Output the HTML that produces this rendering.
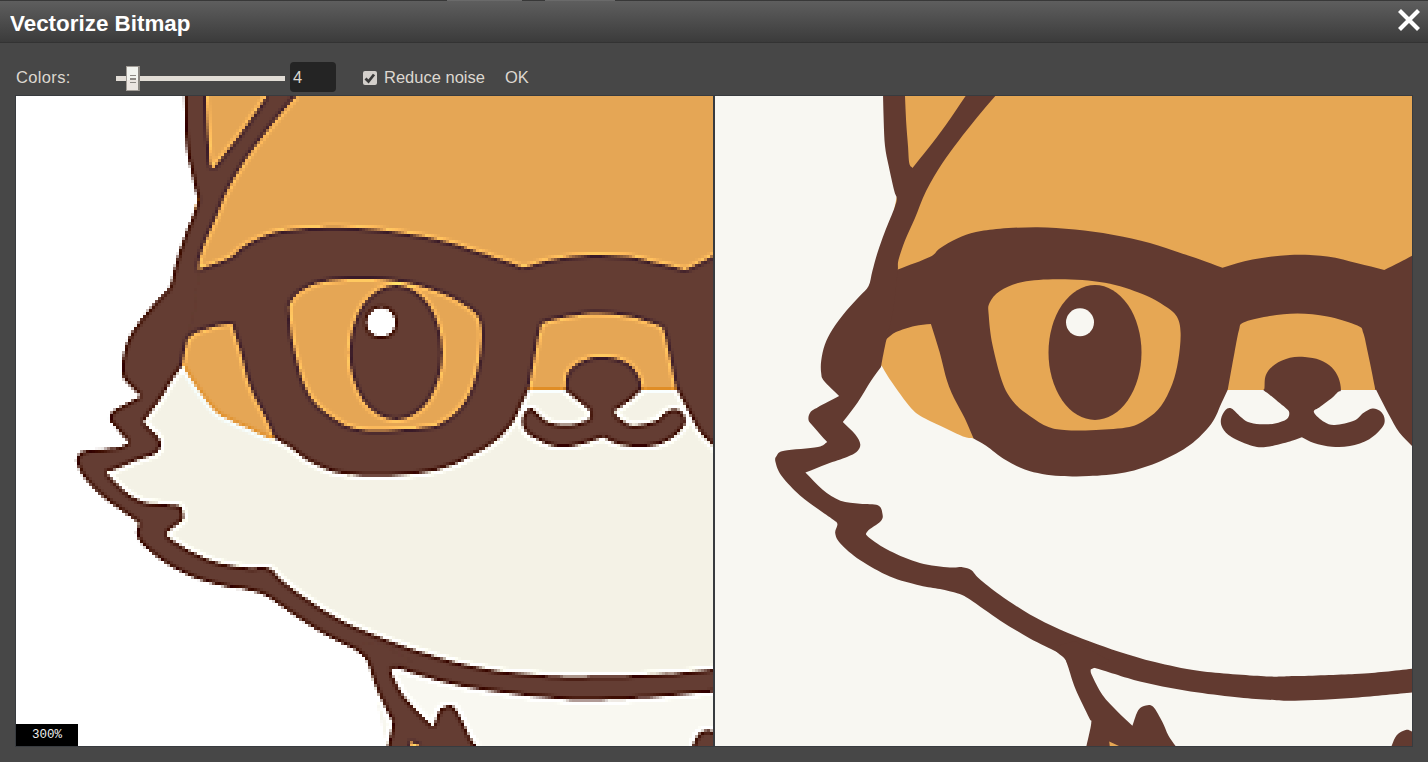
<!DOCTYPE html>
<html><head><meta charset="utf-8"><style>
html,body{margin:0;padding:0;}
body{width:1428px;height:762px;overflow:hidden;background:#474747;position:relative;font-family:"Liberation Sans",sans-serif;}
#title{position:absolute;left:0;top:0;width:1428px;height:42px;background:linear-gradient(#5e5e5e,#3b3b3b);border-top:1px solid #383838;box-sizing:border-box;}
.seg{position:absolute;top:0;height:1px;background:#6a6a6a;}
#tline{position:absolute;left:0;top:42px;width:1428px;height:1px;background:#333;}
#ttext{position:absolute;left:10px;top:12.7px;font-size:22px;line-height:22px;font-weight:bold;color:#fff;white-space:nowrap;transform:scaleX(1.018);transform-origin:0 0;}
#close{position:absolute;left:1396px;top:7px;width:26px;height:26px;}
.lbl{position:absolute;color:#ddd8d0;font-size:16.5px;line-height:16.5px;white-space:nowrap;}
#track{position:absolute;left:116px;top:76px;width:169px;height:5px;background:#e2ddd6;}
#handle{position:absolute;left:126px;top:66px;width:14px;height:25px;box-sizing:border-box;border:1px solid #a09b95;border-right:2px solid #8a8680;background:linear-gradient(#f2f3ee 0,#f2f3ee 56%,#ebe5e0 56%,#ebe5e0 100%);}
#handle i{position:absolute;left:3px;width:6px;background:#8d8984;}
#inp{position:absolute;left:290px;top:62px;width:46px;height:30px;background:#242424;border-radius:4px;}
#chk{position:absolute;left:363px;top:71px;width:14px;height:14px;box-sizing:border-box;background:#d3cfcb;border-radius:2px;}
#stage{position:absolute;left:15px;top:95px;width:1398px;height:652px;background:#383b3f;}
.panel{position:absolute;top:96px;width:697px;height:650px;}
#lwrap{position:absolute;left:16px;top:96px;width:697px;height:650px;overflow:hidden;}
#cv{position:absolute;left:-2px;top:0;width:702px;height:651px;image-rendering:pixelated;}
#zoom{position:absolute;left:16px;top:724px;width:62px;height:22px;background:#000;color:#eee;font-family:"Liberation Mono",monospace;font-size:12.5px;line-height:22px;text-align:center;}
</style></head><body>
<div id="title"></div><div class="seg" style="left:447px;width:75px"></div><div class="seg" style="left:545px;width:70px"></div><div id="tline"></div>
<div id="ttext">Vectorize Bitmap</div>
<svg id="close" viewBox="0 0 26 26"><path d="M3.5,3.5 L22.5,22.5 M22.5,3.5 L3.5,22.5" stroke="#fff" stroke-width="4.2"/></svg>
<div class="lbl" style="left:16px;top:69px;letter-spacing:0.35px">Colors:</div>
<div id="track"></div><div id="handle"><i style="top:8px;height:1px"></i><i style="top:11px;height:2px"></i><i style="top:15px;height:1px"></i></div>
<div id="inp"></div><div class="lbl" style="left:293px;top:69px;">4</div>
<div id="chk"><svg width="14" height="14" viewBox="0 0 14 14" style="position:absolute;left:0;top:0"><path d="M2.5,7.5 L5.5,10.5 L11,3.5" stroke="#3a3a3a" stroke-width="2.8" fill="none"/></svg></div>
<div class="lbl" style="left:384px;top:69px;">Reduce noise</div>
<div class="lbl" style="left:505px;top:69px;">OK</div>
<div id="stage"></div>
<div id="lwrap"><svg style="position:absolute;left:0;top:0;width:697px;height:650px" viewBox="0 0 697 650"><rect width="697" height="650" fill="#ffffff"/>
<path d="M160.0,271.0 C165.3,275.7 169.9,278.1 176.0,285.0 C182.1,291.9 190.7,306.2 196.4,312.4 C202.1,318.6 204.3,319.1 210.1,322.4 C215.9,325.7 222.9,329.1 231.0,332.4 C239.1,335.7 249.4,339.1 258.6,342.4 C287.4,354.9 316.2,367.5 345.0,380.0 C400.9,351.3 456.8,322.7 512.7,294.0 C579.1,294.0 645.6,294.0 712.0,294.0 C712.0,392.7 712.0,491.3 712.0,590.0 C657.7,590.0 594.4,592.3 549.0,590.0 C503.6,587.7 473.9,583.5 439.9,576.0 C405.9,568.5 370.7,556.0 344.9,545.0 C319.1,534.0 303.4,520.5 285.0,510.0 C266.6,499.5 249.0,487.7 234.8,482.0 C220.6,476.3 210.8,478.3 200.0,476.0 C189.2,473.7 180.0,472.0 170.0,468.0 C160.0,464.0 150.0,457.3 140.0,452.0 C126.7,434.7 113.3,417.3 100.0,400.0 C91.7,390.0 83.3,380.0 75.0,370.0 C93.3,364.7 111.7,359.3 130.0,354.0 C125.0,344.7 120.0,335.3 115.0,326.0 C130.0,307.7 145.0,289.3 160.0,271.0 Z" fill="#f4f2e6"/>
<path d="M352.0,568.0 C361.3,569.3 360.4,567.6 380.0,572.0 C399.6,576.4 436.6,588.9 469.9,594.4 C503.2,599.9 539.5,604.5 579.9,604.8 C620.2,605.1 668.0,599.2 712.0,596.4 C712.0,614.9 712.0,633.5 712.0,652.0 C598.3,652.0 484.7,652.0 371.0,652.0 C364.7,624.0 358.3,596.0 352.0,568.0 Z" fill="#f9f8f1"/>
<path d="M176.0,-2.0 C354.7,-2.0 533.3,-2.0 712.0,-2.0 C712.0,96.7 712.0,195.3 712.0,294.0 C645.6,294.0 579.1,294.0 512.7,294.0 C441.8,302.7 370.9,311.3 300.0,320.0 C286.2,327.5 272.4,334.9 258.6,342.4 C255.7,342.0 254.5,342.8 249.9,341.1 C245.3,339.4 237.6,335.5 231.0,332.4 C224.4,329.3 215.9,325.7 210.1,322.4 C204.3,319.1 202.1,318.6 196.4,312.4 C190.7,306.2 181.0,292.1 176.0,285.0 C171.0,277.9 169.7,274.9 166.6,269.8 C161.1,266.5 155.5,263.3 150.0,260.0 C146.7,250.0 143.3,240.0 140.0,230.0 C148.3,213.3 156.7,196.7 165.0,180.0 C170.7,153.3 176.3,126.7 182.0,100.0 C181.7,83.3 181.3,66.7 181.0,50.0 C179.3,32.7 177.7,15.3 176.0,-2.0 Z" fill="#e5a655"/>
<path d="M182.9,173.6 C193.5,169.4 207.7,164.6 214.7,161.1 C221.7,157.6 220.1,155.5 224.7,152.4 C229.3,149.3 236.2,145.1 242.2,142.4 C248.2,139.7 253.8,137.7 260.9,136.1 C268.0,134.5 274.7,133.5 285.0,132.7 C295.3,131.9 310.0,131.1 322.5,131.2 C335.0,131.3 347.4,132.2 359.9,133.5 C372.4,134.8 384.9,136.4 397.4,138.7 C409.9,140.9 423.7,144.0 434.9,147.0 C446.1,150.0 456.4,153.9 464.8,156.7 C473.2,159.4 477.9,161.0 485.0,163.5 C492.1,166.0 500.0,169.0 507.5,171.7 C517.5,169.0 526.3,165.6 537.5,163.5 C548.7,161.4 562.4,159.5 574.9,159.0 C587.4,158.5 601.1,159.1 612.4,160.5 C623.6,161.9 632.9,165.0 642.4,167.2 C651.9,169.4 660.3,171.7 669.3,173.9 C674.3,171.4 679.7,168.9 684.3,166.5 C688.9,164.1 692.4,162.3 697.0,159.7 C701.6,157.1 707.0,153.9 712.0,151.0 C712.0,223.3 712.0,295.7 712.0,368.0 C707.0,362.0 701.6,355.2 697.0,350.0 C692.4,344.8 688.2,341.8 684.3,336.5 C680.4,331.2 677.7,325.6 673.8,318.5 C669.9,311.4 665.3,302.0 661.1,293.7 C611.6,293.7 562.2,293.7 512.7,293.7 C510.6,298.1 509.2,301.4 506.5,307.0 C503.8,312.6 501.8,320.4 496.5,327.4 C491.2,334.4 483.3,342.8 474.9,349.0 C466.5,355.2 456.8,360.3 446.0,364.9 C435.2,369.5 421.9,374.0 409.9,376.5 C397.9,379.0 384.6,379.5 373.9,380.1 C363.2,380.7 353.7,380.4 345.9,380.0 C338.1,379.6 333.2,379.0 327.2,377.9 C321.2,376.8 316.0,375.9 309.8,373.5 C303.6,371.1 296.2,367.6 289.8,363.6 C283.4,359.7 276.3,353.3 271.1,349.8 C265.9,346.3 262.8,344.9 258.6,342.4 C255.7,335.7 253.0,328.8 249.9,322.4 C246.8,315.9 242.9,309.9 239.9,303.7 C236.9,297.5 234.7,292.9 232.1,285.0 C229.5,277.1 227.3,265.6 224.6,256.1 C221.9,246.6 218.8,237.4 215.9,228.0 C210.5,228.6 205.5,228.6 199.7,229.9 C193.9,231.2 185.8,233.8 181.0,236.1 C176.2,238.4 174.3,241.1 171.0,243.6 C167.3,235.7 161.0,228.9 160.0,220.0 C159.0,211.1 163.3,200.0 165.0,190.0 C171.0,184.5 176.9,179.1 182.9,173.6 Z" fill="#643d33"/>
<path d="M285.0,195.0 C279.5,198.5 276.4,203.0 274.5,207.0 C272.6,211.0 273.2,212.0 273.7,219.0 C274.2,226.0 275.1,237.5 277.5,249.0 C279.9,260.5 284.3,278.3 288.0,288.0 C291.7,297.7 295.3,302.1 299.8,307.4 C304.3,312.7 309.2,315.9 314.8,319.9 C320.4,323.8 327.3,328.7 333.5,331.1 C339.7,333.5 344.3,333.8 352.2,334.3 C360.1,334.8 370.6,334.4 381.0,333.9 C391.4,333.3 405.9,332.8 414.3,331.0 C422.7,329.2 426.3,326.6 431.6,323.1 C436.9,319.6 441.7,316.0 446.0,310.1 C450.3,304.2 454.4,295.7 457.3,288.0 C460.2,280.3 461.9,272.4 463.3,263.9 C464.7,255.4 465.9,244.2 465.6,237.0 C465.4,229.8 464.4,224.9 461.8,220.4 C459.2,215.9 455.5,213.7 449.8,209.9 C444.1,206.2 437.4,201.8 427.4,197.9 C417.4,194.0 403.6,189.1 389.9,186.7 C376.1,184.2 358.6,183.3 344.9,183.2 C331.2,183.1 317.5,183.9 307.5,185.9 C297.5,187.9 290.5,191.5 285.0,195.0 Z" fill="#e5a655"/>
<path d="M528.5,226.5 C533.2,224.2 543.4,222.0 552.4,220.5 C561.4,219.0 572.4,217.5 582.4,217.5 C592.4,217.5 602.4,218.5 612.4,220.5 C622.4,222.5 636.4,226.8 642.4,229.5 C648.4,232.2 646.6,232.5 648.3,237.0 C650.0,241.5 650.9,247.7 652.8,256.5 C654.7,265.3 658.5,283.8 659.6,290.0 C660.7,296.2 659.6,292.7 659.6,294.0 C610.6,294.0 561.7,294.0 512.7,294.0 C515.0,281.5 517.6,266.5 519.5,256.5 C521.4,246.5 522.5,239.0 524.0,234.0 C525.5,229.0 523.8,228.8 528.5,226.5 Z" fill="#e5a655"/>
<ellipse cx="380" cy="256.5" rx="46.5" ry="67.5" fill="#643d33"/>
<circle cx="365" cy="226.3" r="14" fill="#ffffff"/>
<path d="M168.0,-2.0 C168.2,7.0 168.4,16.3 168.7,25.0 C169.0,33.7 169.2,42.5 170.0,50.0 C170.8,57.5 172.1,62.5 173.7,70.0 C175.2,77.5 178.0,89.7 179.3,95.0 C180.6,100.3 181.6,99.3 181.7,102.0 C181.8,104.7 181.8,105.3 179.8,111.0 C177.8,116.7 172.7,128.3 169.8,136.0 C166.9,143.7 164.5,150.5 162.4,157.0 C160.3,163.5 158.9,169.5 157.4,175.0 C155.9,180.5 155.7,185.8 153.6,190.0 C151.5,194.2 148.6,195.8 144.8,200.0 C141.1,204.2 135.7,209.4 131.1,215.0 C126.5,220.6 120.9,228.0 117.4,233.6 C113.9,239.2 111.8,243.4 109.9,248.6 C108.0,253.8 106.8,260.0 106.2,264.8 C105.6,269.6 105.7,273.9 106.2,277.3 C106.7,280.7 106.1,281.2 109.1,285.0 C112.1,288.8 119.1,295.0 124.1,300.0 C117.0,303.7 107.7,308.5 102.9,311.2 C98.1,313.9 97.0,314.1 95.4,316.2 C93.8,318.3 93.1,321.4 93.5,323.7 C93.9,326.0 94.8,326.2 97.9,329.9 C101.0,333.6 107.4,340.7 112.2,346.1 C109.1,347.8 110.1,349.7 102.9,351.1 C95.7,352.6 76.1,353.4 69.2,354.8 C62.3,356.2 63.2,357.9 61.7,359.8 C60.2,361.7 59.7,362.6 60.5,366.0 C61.3,369.4 62.6,374.4 66.7,380.0 C70.8,385.6 79.0,394.0 85.0,399.5 C91.0,405.0 97.5,409.0 103.0,413.0 C108.5,417.0 114.7,421.0 117.9,423.5 C121.1,426.0 122.0,425.8 122.4,428.0 C122.8,430.2 119.7,433.8 120.2,437.0 C120.7,440.2 121.3,442.9 125.4,447.4 C129.5,451.9 136.7,458.4 144.9,463.9 C153.2,469.4 164.9,476.1 174.9,480.4 C184.9,484.6 196.6,487.3 204.9,489.4 C213.2,491.5 218.7,491.6 225.0,493.0 C231.3,494.4 238.0,495.8 243.0,497.5 C248.0,499.2 248.0,499.0 255.0,503.5 C262.0,508.0 275.0,517.9 285.0,524.4 C295.0,530.9 305.4,537.1 314.9,542.4 C324.4,547.6 336.1,552.6 341.9,555.9 C347.6,559.1 347.6,559.9 349.4,561.9 C351.1,563.9 351.4,566.0 352.4,568.0 C360.1,569.8 367.8,571.7 375.5,573.5 C377.0,573.0 371.8,570.0 380.0,572.0 C388.2,574.0 409.9,581.8 424.9,585.5 C439.9,589.2 454.9,591.9 469.9,594.4 C484.9,596.9 501.6,598.9 514.8,600.4 C528.0,601.9 538.1,602.7 549.0,603.4 C559.9,604.1 564.8,605.1 579.9,604.8 C595.0,604.5 620.3,603.2 639.8,601.8 C659.3,600.4 685.0,597.7 697.0,596.6 C709.0,595.5 707.0,595.5 712.0,595.0 C712.0,587.0 712.0,579.0 712.0,571.0 C707.0,571.6 704.0,571.9 697.0,572.7 C690.0,573.5 679.2,574.8 669.7,575.7 C660.2,576.6 654.8,577.2 639.8,577.9 C624.8,578.6 595.0,579.7 579.9,580.1 C564.8,580.5 564.8,581.1 549.0,580.2 C533.2,579.4 503.1,577.4 484.9,575.0 C466.7,572.6 453.2,569.2 439.9,566.0 C426.5,562.8 415.6,559.3 404.8,555.9 C394.0,552.5 384.9,549.1 374.9,545.4 C364.9,541.6 354.9,537.9 344.9,533.4 C334.9,528.9 324.9,524.1 314.9,518.4 C304.9,512.7 293.5,505.0 285.0,499.0 C276.5,493.0 268.8,486.6 264.0,482.5 C259.2,478.4 259.2,476.1 256.5,474.2 C253.8,472.3 251.1,471.7 247.5,471.2 C243.9,470.7 241.9,472.1 234.8,471.4 C227.7,470.7 214.9,469.6 204.9,466.9 C194.9,464.1 183.4,459.1 174.9,454.9 C166.4,450.6 157.7,444.6 153.9,441.4 C150.2,438.1 150.4,438.1 152.4,435.4 C154.4,432.7 163.4,428.0 165.9,425.0 C168.4,422.0 167.9,420.1 167.4,417.5 C166.9,414.9 166.7,410.8 162.9,409.2 C159.2,407.6 151.2,408.4 144.9,407.7 C138.7,406.9 131.7,407.1 125.4,404.7 C119.2,402.3 113.2,398.2 107.4,393.5 C101.6,388.8 96.1,382.2 90.4,376.6 C97.6,373.7 105.1,370.6 112.0,368.0 C118.9,365.4 127.1,363.0 132.0,361.0 C136.9,359.0 139.3,358.2 141.5,356.1 C143.7,354.0 145.5,351.5 145.3,348.6 C145.1,345.7 143.2,342.4 140.3,338.6 C137.4,334.9 132.0,330.3 127.8,326.1 C132.8,319.5 138.1,313.1 142.8,306.2 C147.5,299.3 152.0,290.9 155.9,285.0 C159.8,279.1 162.6,275.7 166.0,271.0 C167.3,264.0 168.0,259.3 170.0,250.0 C172.0,240.7 175.8,227.8 178.0,215.0 C180.2,202.2 181.3,187.0 182.9,173.0 C183.1,169.9 182.4,168.3 183.6,163.6 C184.8,158.9 187.1,151.8 189.8,144.9 C192.5,138.0 196.2,130.7 199.8,122.4 C203.4,114.1 206.5,104.2 211.1,95.0 C215.7,85.8 221.9,75.6 227.3,67.3 C232.7,58.9 237.7,52.6 243.5,44.9 C249.3,37.2 255.8,29.0 262.2,21.2 C268.6,13.4 275.4,5.7 282.0,-2.0 C272.0,-2.0 262.0,-2.0 252.0,-2.0 C245.0,8.2 237.6,19.4 231.0,28.7 C224.4,38.0 217.9,46.4 212.3,53.6 C206.7,60.8 202.4,65.9 197.5,72.0 C196.4,70.4 195.1,71.0 194.3,67.3 C193.6,63.6 193.5,57.0 193.0,50.0 C192.5,43.0 191.6,33.7 191.1,25.0 C190.6,16.3 190.3,7.0 189.9,-2.0 C182.6,-2.0 175.3,-2.0 168.0,-2.0 Z" fill="#643d33"/>
<path d="M340.0,552.0 C338.3,555.0 347.8,559.9 350.0,563.0 C352.2,566.1 351.2,565.5 353.0,570.5 C354.8,575.5 357.0,584.5 360.5,593.0 C364.0,601.5 371.4,615.7 374.0,621.4 C376.6,627.1 376.7,622.3 376.2,627.4 C375.7,632.5 372.7,643.8 371.0,652.0 C401.3,652.0 431.7,652.0 462.0,652.0 C459.1,647.8 455.8,643.7 453.4,639.4 C451.0,635.1 449.9,630.7 447.4,626.0 C444.9,621.3 441.1,613.8 438.4,611.0 C435.6,608.2 433.4,608.9 430.9,609.4 C428.4,609.9 425.6,610.6 423.4,614.0 C421.1,617.4 419.4,624.5 417.4,629.7 C412.4,624.9 407.4,620.5 402.4,615.4 C397.4,610.3 391.7,605.0 387.5,599.0 C383.3,593.0 379.0,583.8 377.0,579.5 C375.0,575.2 376.0,575.5 375.5,573.5 C382.0,570.7 388.5,567.8 395.0,565.0 C383.3,558.3 371.7,551.7 360.0,545.0 C353.3,547.3 341.7,549.0 340.0,552.0 Z" fill="#643d33"/>
<path d="M549.4,292.4 C549.9,289.9 549.1,282.9 550.9,278.9 C552.6,274.9 555.9,271.3 559.9,268.4 C563.9,265.5 569.9,262.9 574.9,261.7 C579.9,260.4 584.9,260.5 589.9,260.9 C594.9,261.3 600.4,262.1 604.9,263.9 C609.4,265.6 613.8,268.4 616.9,271.4 C620.0,274.4 622.1,278.2 623.6,281.9 C625.1,285.6 626.0,291.3 625.9,293.7 C625.8,296.1 624.4,294.6 622.9,296.0 C621.4,297.4 619.9,299.5 616.9,302.0 C613.9,304.5 607.9,308.6 604.9,311.0 C601.9,313.4 598.1,313.7 598.9,316.2 C599.6,318.7 605.9,323.9 609.4,326.0 C612.9,328.1 614.9,329.2 619.9,329.0 C624.9,328.8 634.7,326.5 639.4,324.5 C644.1,322.5 645.3,319.0 648.3,317.0 C651.3,315.0 654.5,312.9 657.3,312.5 C660.0,312.1 662.8,313.2 664.8,314.7 C666.8,316.2 668.8,318.9 669.3,321.5 C669.8,324.1 670.3,326.9 667.8,330.5 C665.3,334.1 659.8,339.9 654.3,343.2 C648.8,346.4 641.1,348.8 634.9,350.0 C628.7,351.2 622.9,351.2 616.9,350.7 C610.9,350.2 603.9,348.5 598.9,346.9 C593.9,345.3 590.9,343.1 586.9,341.2 C582.9,342.6 580.6,343.8 574.9,345.4 C569.1,347.0 558.6,349.9 552.4,350.7 C546.2,351.5 543.5,351.6 537.5,350.0 C531.5,348.4 521.5,344.0 516.5,341.0 C511.5,338.0 509.2,335.0 507.5,332.0 C505.8,329.0 505.5,326.0 506.0,323.0 C506.5,320.0 508.8,315.8 510.5,314.0 C512.2,312.2 514.0,311.4 516.5,312.5 C519.0,313.6 522.8,318.4 525.5,320.7 C528.2,322.9 529.8,324.8 533.0,326.0 C536.2,327.2 540.4,327.9 544.9,328.2 C549.4,328.4 555.4,328.4 559.9,327.5 C564.4,326.6 569.5,324.9 571.9,323.0 C574.3,321.1 574.5,318.1 574.2,316.2 C574.0,314.3 572.3,313.4 570.4,311.7 C568.5,309.9 565.7,307.9 563.0,305.7 C560.3,303.4 556.5,300.2 554.0,298.2 C551.5,296.2 548.8,294.7 548.0,293.7 C547.2,292.7 548.9,294.9 549.4,292.4 Z" fill="#643d33"/>
<path d="M675.7,652.0 C677.7,647.8 679.2,642.3 681.7,639.3 C684.2,636.3 688.1,634.6 690.6,634.0 C693.1,633.4 693.4,633.7 697.0,635.5 C700.6,637.3 707.0,641.8 712.0,645.0 C712.0,647.3 712.0,649.7 712.0,652.0 C699.9,652.0 687.8,652.0 675.7,652.0 Z" fill="#643d33"/>
<path d="M394.2,645.4 C397.5,646.9 400.7,648.5 404.0,650.0 C401.0,650.7 398.0,651.3 395.0,652.0 C394.7,649.8 394.5,647.6 394.2,645.4 Z" fill="#e5a655"/></svg><canvas id="cv" width="234" height="217"></canvas></div>
<svg class="panel" style="left:715px" viewBox="0 0 697 650"><rect width="697" height="650" fill="#f8f7f2"/>
<path d="M176.0,-2.0 C354.7,-2.0 533.3,-2.0 712.0,-2.0 C712.0,96.7 712.0,195.3 712.0,294.0 C645.6,294.0 579.1,294.0 512.7,294.0 C441.8,302.7 370.9,311.3 300.0,320.0 C286.2,327.5 272.4,334.9 258.6,342.4 C255.7,342.0 254.5,342.8 249.9,341.1 C245.3,339.4 237.6,335.5 231.0,332.4 C224.4,329.3 215.9,325.7 210.1,322.4 C204.3,319.1 202.1,318.6 196.4,312.4 C190.7,306.2 181.0,292.1 176.0,285.0 C171.0,277.9 169.7,274.9 166.6,269.8 C161.1,266.5 155.5,263.3 150.0,260.0 C146.7,250.0 143.3,240.0 140.0,230.0 C148.3,213.3 156.7,196.7 165.0,180.0 C170.7,153.3 176.3,126.7 182.0,100.0 C181.7,83.3 181.3,66.7 181.0,50.0 C179.3,32.7 177.7,15.3 176.0,-2.0 Z" fill="#e6a754"/>
<path d="M182.9,173.6 C193.5,169.4 207.7,164.6 214.7,161.1 C221.7,157.6 220.1,155.5 224.7,152.4 C229.3,149.3 236.2,145.1 242.2,142.4 C248.2,139.7 253.8,137.7 260.9,136.1 C268.0,134.5 274.7,133.5 285.0,132.7 C295.3,131.9 310.0,131.1 322.5,131.2 C335.0,131.3 347.4,132.2 359.9,133.5 C372.4,134.8 384.9,136.4 397.4,138.7 C409.9,140.9 423.7,144.0 434.9,147.0 C446.1,150.0 456.4,153.9 464.8,156.7 C473.2,159.4 477.9,161.0 485.0,163.5 C492.1,166.0 500.0,169.0 507.5,171.7 C517.5,169.0 526.3,165.6 537.5,163.5 C548.7,161.4 562.4,159.5 574.9,159.0 C587.4,158.5 601.1,159.1 612.4,160.5 C623.6,161.9 632.9,165.0 642.4,167.2 C651.9,169.4 660.3,171.7 669.3,173.9 C674.3,171.4 679.7,168.9 684.3,166.5 C688.9,164.1 692.4,162.3 697.0,159.7 C701.6,157.1 707.0,153.9 712.0,151.0 C712.0,223.3 712.0,295.7 712.0,368.0 C707.0,362.0 701.6,355.2 697.0,350.0 C692.4,344.8 688.2,341.8 684.3,336.5 C680.4,331.2 677.7,325.6 673.8,318.5 C669.9,311.4 665.3,302.0 661.1,293.7 C611.6,293.7 562.2,293.7 512.7,293.7 C510.6,298.1 509.2,301.4 506.5,307.0 C503.8,312.6 501.8,320.4 496.5,327.4 C491.2,334.4 483.3,342.8 474.9,349.0 C466.5,355.2 456.8,360.3 446.0,364.9 C435.2,369.5 421.9,374.0 409.9,376.5 C397.9,379.0 384.6,379.5 373.9,380.1 C363.2,380.7 353.7,380.4 345.9,380.0 C338.1,379.6 333.2,379.0 327.2,377.9 C321.2,376.8 316.0,375.9 309.8,373.5 C303.6,371.1 296.2,367.6 289.8,363.6 C283.4,359.7 276.3,353.3 271.1,349.8 C265.9,346.3 262.8,344.9 258.6,342.4 C255.7,335.7 253.0,328.8 249.9,322.4 C246.8,315.9 242.9,309.9 239.9,303.7 C236.9,297.5 234.7,292.9 232.1,285.0 C229.5,277.1 227.3,265.6 224.6,256.1 C221.9,246.6 218.8,237.4 215.9,228.0 C210.5,228.6 205.5,228.6 199.7,229.9 C193.9,231.2 185.8,233.8 181.0,236.1 C176.2,238.4 174.3,241.1 171.0,243.6 C167.3,235.7 161.0,228.9 160.0,220.0 C159.0,211.1 163.3,200.0 165.0,190.0 C171.0,184.5 176.9,179.1 182.9,173.6 Z" fill="#623a30"/>
<path d="M285.0,195.0 C279.5,198.5 276.4,203.0 274.5,207.0 C272.6,211.0 273.2,212.0 273.7,219.0 C274.2,226.0 275.1,237.5 277.5,249.0 C279.9,260.5 284.3,278.3 288.0,288.0 C291.7,297.7 295.3,302.1 299.8,307.4 C304.3,312.7 309.2,315.9 314.8,319.9 C320.4,323.8 327.3,328.7 333.5,331.1 C339.7,333.5 344.3,333.8 352.2,334.3 C360.1,334.8 370.6,334.4 381.0,333.9 C391.4,333.3 405.9,332.8 414.3,331.0 C422.7,329.2 426.3,326.6 431.6,323.1 C436.9,319.6 441.7,316.0 446.0,310.1 C450.3,304.2 454.4,295.7 457.3,288.0 C460.2,280.3 461.9,272.4 463.3,263.9 C464.7,255.4 465.9,244.2 465.6,237.0 C465.4,229.8 464.4,224.9 461.8,220.4 C459.2,215.9 455.5,213.7 449.8,209.9 C444.1,206.2 437.4,201.8 427.4,197.9 C417.4,194.0 403.6,189.1 389.9,186.7 C376.1,184.2 358.6,183.3 344.9,183.2 C331.2,183.1 317.5,183.9 307.5,185.9 C297.5,187.9 290.5,191.5 285.0,195.0 Z" fill="#e6a754"/>
<path d="M528.5,226.5 C533.2,224.2 543.4,222.0 552.4,220.5 C561.4,219.0 572.4,217.5 582.4,217.5 C592.4,217.5 602.4,218.5 612.4,220.5 C622.4,222.5 636.4,226.8 642.4,229.5 C648.4,232.2 646.6,232.5 648.3,237.0 C650.0,241.5 650.9,247.7 652.8,256.5 C654.7,265.3 658.5,283.8 659.6,290.0 C660.7,296.2 659.6,292.7 659.6,294.0 C610.6,294.0 561.7,294.0 512.7,294.0 C515.0,281.5 517.6,266.5 519.5,256.5 C521.4,246.5 522.5,239.0 524.0,234.0 C525.5,229.0 523.8,228.8 528.5,226.5 Z" fill="#e6a754"/>
<ellipse cx="380" cy="256.5" rx="46.5" ry="67.5" fill="#623a30"/>
<circle cx="365" cy="226.3" r="14" fill="#f8f7f2"/>
<path d="M168.0,-2.0 C168.2,7.0 168.4,16.3 168.7,25.0 C169.0,33.7 169.2,42.5 170.0,50.0 C170.8,57.5 172.1,62.5 173.7,70.0 C175.2,77.5 178.0,89.7 179.3,95.0 C180.6,100.3 181.6,99.3 181.7,102.0 C181.8,104.7 181.8,105.3 179.8,111.0 C177.8,116.7 172.7,128.3 169.8,136.0 C166.9,143.7 164.5,150.5 162.4,157.0 C160.3,163.5 158.9,169.5 157.4,175.0 C155.9,180.5 155.7,185.8 153.6,190.0 C151.5,194.2 148.6,195.8 144.8,200.0 C141.1,204.2 135.7,209.4 131.1,215.0 C126.5,220.6 120.9,228.0 117.4,233.6 C113.9,239.2 111.8,243.4 109.9,248.6 C108.0,253.8 106.8,260.0 106.2,264.8 C105.6,269.6 105.7,273.9 106.2,277.3 C106.7,280.7 106.1,281.2 109.1,285.0 C112.1,288.8 119.1,295.0 124.1,300.0 C117.0,303.7 107.7,308.5 102.9,311.2 C98.1,313.9 97.0,314.1 95.4,316.2 C93.8,318.3 93.1,321.4 93.5,323.7 C93.9,326.0 94.8,326.2 97.9,329.9 C101.0,333.6 107.4,340.7 112.2,346.1 C109.1,347.8 110.1,349.7 102.9,351.1 C95.7,352.6 76.1,353.4 69.2,354.8 C62.3,356.2 63.2,357.9 61.7,359.8 C60.2,361.7 59.7,362.6 60.5,366.0 C61.3,369.4 62.6,374.4 66.7,380.0 C70.8,385.6 79.0,394.0 85.0,399.5 C91.0,405.0 97.5,409.0 103.0,413.0 C108.5,417.0 114.7,421.0 117.9,423.5 C121.1,426.0 122.0,425.8 122.4,428.0 C122.8,430.2 119.7,433.8 120.2,437.0 C120.7,440.2 121.3,442.9 125.4,447.4 C129.5,451.9 136.7,458.4 144.9,463.9 C153.2,469.4 164.9,476.1 174.9,480.4 C184.9,484.6 196.6,487.3 204.9,489.4 C213.2,491.5 218.7,491.6 225.0,493.0 C231.3,494.4 238.0,495.8 243.0,497.5 C248.0,499.2 248.0,499.0 255.0,503.5 C262.0,508.0 275.0,517.9 285.0,524.4 C295.0,530.9 305.4,537.1 314.9,542.4 C324.4,547.6 336.1,552.6 341.9,555.9 C347.6,559.1 347.6,559.9 349.4,561.9 C351.1,563.9 351.4,566.0 352.4,568.0 C360.1,569.8 367.8,571.7 375.5,573.5 C377.0,573.0 371.8,570.0 380.0,572.0 C388.2,574.0 409.9,581.8 424.9,585.5 C439.9,589.2 454.9,591.9 469.9,594.4 C484.9,596.9 501.6,598.9 514.8,600.4 C528.0,601.9 538.1,602.7 549.0,603.4 C559.9,604.1 564.8,605.1 579.9,604.8 C595.0,604.5 620.3,603.2 639.8,601.8 C659.3,600.4 685.0,597.7 697.0,596.6 C709.0,595.5 707.0,595.5 712.0,595.0 C712.0,587.0 712.0,579.0 712.0,571.0 C707.0,571.6 704.0,571.9 697.0,572.7 C690.0,573.5 679.2,574.8 669.7,575.7 C660.2,576.6 654.8,577.2 639.8,577.9 C624.8,578.6 595.0,579.7 579.9,580.1 C564.8,580.5 564.8,581.1 549.0,580.2 C533.2,579.4 503.1,577.4 484.9,575.0 C466.7,572.6 453.2,569.2 439.9,566.0 C426.5,562.8 415.6,559.3 404.8,555.9 C394.0,552.5 384.9,549.1 374.9,545.4 C364.9,541.6 354.9,537.9 344.9,533.4 C334.9,528.9 324.9,524.1 314.9,518.4 C304.9,512.7 293.5,505.0 285.0,499.0 C276.5,493.0 268.8,486.6 264.0,482.5 C259.2,478.4 259.2,476.1 256.5,474.2 C253.8,472.3 251.1,471.7 247.5,471.2 C243.9,470.7 241.9,472.1 234.8,471.4 C227.7,470.7 214.9,469.6 204.9,466.9 C194.9,464.1 183.4,459.1 174.9,454.9 C166.4,450.6 157.7,444.6 153.9,441.4 C150.2,438.1 150.4,438.1 152.4,435.4 C154.4,432.7 163.4,428.0 165.9,425.0 C168.4,422.0 167.9,420.1 167.4,417.5 C166.9,414.9 166.7,410.8 162.9,409.2 C159.2,407.6 151.2,408.4 144.9,407.7 C138.7,406.9 131.7,407.1 125.4,404.7 C119.2,402.3 113.2,398.2 107.4,393.5 C101.6,388.8 96.1,382.2 90.4,376.6 C97.6,373.7 105.1,370.6 112.0,368.0 C118.9,365.4 127.1,363.0 132.0,361.0 C136.9,359.0 139.3,358.2 141.5,356.1 C143.7,354.0 145.5,351.5 145.3,348.6 C145.1,345.7 143.2,342.4 140.3,338.6 C137.4,334.9 132.0,330.3 127.8,326.1 C132.8,319.5 138.1,313.1 142.8,306.2 C147.5,299.3 152.0,290.9 155.9,285.0 C159.8,279.1 162.6,275.7 166.0,271.0 C167.3,264.0 168.0,259.3 170.0,250.0 C172.0,240.7 175.8,227.8 178.0,215.0 C180.2,202.2 181.3,187.0 182.9,173.0 C183.1,169.9 182.4,168.3 183.6,163.6 C184.8,158.9 187.1,151.8 189.8,144.9 C192.5,138.0 196.2,130.7 199.8,122.4 C203.4,114.1 206.5,104.2 211.1,95.0 C215.7,85.8 221.9,75.6 227.3,67.3 C232.7,58.9 237.7,52.6 243.5,44.9 C249.3,37.2 255.8,29.0 262.2,21.2 C268.6,13.4 275.4,5.7 282.0,-2.0 C272.0,-2.0 262.0,-2.0 252.0,-2.0 C245.0,8.2 237.6,19.4 231.0,28.7 C224.4,38.0 217.9,46.4 212.3,53.6 C206.7,60.8 202.4,65.9 197.5,72.0 C196.4,70.4 195.1,71.0 194.3,67.3 C193.6,63.6 193.5,57.0 193.0,50.0 C192.5,43.0 191.6,33.7 191.1,25.0 C190.6,16.3 190.3,7.0 189.9,-2.0 C182.6,-2.0 175.3,-2.0 168.0,-2.0 Z" fill="#623a30"/>
<path d="M340.0,552.0 C338.3,555.0 347.8,559.9 350.0,563.0 C352.2,566.1 351.2,565.5 353.0,570.5 C354.8,575.5 357.0,584.5 360.5,593.0 C364.0,601.5 371.4,615.7 374.0,621.4 C376.6,627.1 376.7,622.3 376.2,627.4 C375.7,632.5 372.7,643.8 371.0,652.0 C401.3,652.0 431.7,652.0 462.0,652.0 C459.1,647.8 455.8,643.7 453.4,639.4 C451.0,635.1 449.9,630.7 447.4,626.0 C444.9,621.3 441.1,613.8 438.4,611.0 C435.6,608.2 433.4,608.9 430.9,609.4 C428.4,609.9 425.6,610.6 423.4,614.0 C421.1,617.4 419.4,624.5 417.4,629.7 C412.4,624.9 407.4,620.5 402.4,615.4 C397.4,610.3 391.7,605.0 387.5,599.0 C383.3,593.0 379.0,583.8 377.0,579.5 C375.0,575.2 376.0,575.5 375.5,573.5 C382.0,570.7 388.5,567.8 395.0,565.0 C383.3,558.3 371.7,551.7 360.0,545.0 C353.3,547.3 341.7,549.0 340.0,552.0 Z" fill="#623a30"/>
<path d="M549.4,292.4 C549.9,289.9 549.1,282.9 550.9,278.9 C552.6,274.9 555.9,271.3 559.9,268.4 C563.9,265.5 569.9,262.9 574.9,261.7 C579.9,260.4 584.9,260.5 589.9,260.9 C594.9,261.3 600.4,262.1 604.9,263.9 C609.4,265.6 613.8,268.4 616.9,271.4 C620.0,274.4 622.1,278.2 623.6,281.9 C625.1,285.6 626.0,291.3 625.9,293.7 C625.8,296.1 624.4,294.6 622.9,296.0 C621.4,297.4 619.9,299.5 616.9,302.0 C613.9,304.5 607.9,308.6 604.9,311.0 C601.9,313.4 598.1,313.7 598.9,316.2 C599.6,318.7 605.9,323.9 609.4,326.0 C612.9,328.1 614.9,329.2 619.9,329.0 C624.9,328.8 634.7,326.5 639.4,324.5 C644.1,322.5 645.3,319.0 648.3,317.0 C651.3,315.0 654.5,312.9 657.3,312.5 C660.0,312.1 662.8,313.2 664.8,314.7 C666.8,316.2 668.8,318.9 669.3,321.5 C669.8,324.1 670.3,326.9 667.8,330.5 C665.3,334.1 659.8,339.9 654.3,343.2 C648.8,346.4 641.1,348.8 634.9,350.0 C628.7,351.2 622.9,351.2 616.9,350.7 C610.9,350.2 603.9,348.5 598.9,346.9 C593.9,345.3 590.9,343.1 586.9,341.2 C582.9,342.6 580.6,343.8 574.9,345.4 C569.1,347.0 558.6,349.9 552.4,350.7 C546.2,351.5 543.5,351.6 537.5,350.0 C531.5,348.4 521.5,344.0 516.5,341.0 C511.5,338.0 509.2,335.0 507.5,332.0 C505.8,329.0 505.5,326.0 506.0,323.0 C506.5,320.0 508.8,315.8 510.5,314.0 C512.2,312.2 514.0,311.4 516.5,312.5 C519.0,313.6 522.8,318.4 525.5,320.7 C528.2,322.9 529.8,324.8 533.0,326.0 C536.2,327.2 540.4,327.9 544.9,328.2 C549.4,328.4 555.4,328.4 559.9,327.5 C564.4,326.6 569.5,324.9 571.9,323.0 C574.3,321.1 574.5,318.1 574.2,316.2 C574.0,314.3 572.3,313.4 570.4,311.7 C568.5,309.9 565.7,307.9 563.0,305.7 C560.3,303.4 556.5,300.2 554.0,298.2 C551.5,296.2 548.8,294.7 548.0,293.7 C547.2,292.7 548.9,294.9 549.4,292.4 Z" fill="#623a30"/>
<path d="M675.7,652.0 C677.7,647.8 679.2,642.3 681.7,639.3 C684.2,636.3 688.1,634.6 690.6,634.0 C693.1,633.4 693.4,633.7 697.0,635.5 C700.6,637.3 707.0,641.8 712.0,645.0 C712.0,647.3 712.0,649.7 712.0,652.0 C699.9,652.0 687.8,652.0 675.7,652.0 Z" fill="#623a30"/>
<path d="M394.2,645.4 C397.5,646.9 400.7,648.5 404.0,650.0 C401.0,650.7 398.0,651.3 395.0,652.0 C394.7,649.8 394.5,647.6 394.2,645.4 Z" fill="#e6a754"/></svg>
<div id="zoom">300%</div>
<script>
(function(){
var cv=document.getElementById('cv'); if(!cv||!cv.getContext) return;
var x=cv.getContext('2d'); x.imageSmoothingEnabled=false;
x.setTransform(1/3,0,0,1/3,2/3,0);
var ops=[["M-5,-5 L705,-5 L705,655 L-5,655 Z", "#ffffff"], ["M160.0,271.0 C165.3,275.7 169.9,278.1 176.0,285.0 C182.1,291.9 190.7,306.2 196.4,312.4 C202.1,318.6 204.3,319.1 210.1,322.4 C215.9,325.7 222.9,329.1 231.0,332.4 C239.1,335.7 249.4,339.1 258.6,342.4 C287.4,354.9 316.2,367.5 345.0,380.0 C400.9,351.3 456.8,322.7 512.7,294.0 C579.1,294.0 645.6,294.0 712.0,294.0 C712.0,392.7 712.0,491.3 712.0,590.0 C657.7,590.0 594.4,592.3 549.0,590.0 C503.6,587.7 473.9,583.5 439.9,576.0 C405.9,568.5 370.7,556.0 344.9,545.0 C319.1,534.0 303.4,520.5 285.0,510.0 C266.6,499.5 249.0,487.7 234.8,482.0 C220.6,476.3 210.8,478.3 200.0,476.0 C189.2,473.7 180.0,472.0 170.0,468.0 C160.0,464.0 150.0,457.3 140.0,452.0 C126.7,434.7 113.3,417.3 100.0,400.0 C91.7,390.0 83.3,380.0 75.0,370.0 C93.3,364.7 111.7,359.3 130.0,354.0 C125.0,344.7 120.0,335.3 115.0,326.0 C130.0,307.7 145.0,289.3 160.0,271.0 Z", "#f4f2e6"], ["M352.0,568.0 C361.3,569.3 360.4,567.6 380.0,572.0 C399.6,576.4 436.6,588.9 469.9,594.4 C503.2,599.9 539.5,604.5 579.9,604.8 C620.2,605.1 668.0,599.2 712.0,596.4 C712.0,614.9 712.0,633.5 712.0,652.0 C598.3,652.0 484.7,652.0 371.0,652.0 C364.7,624.0 358.3,596.0 352.0,568.0 Z", "#f9f8f1"], ["M176.0,-2.0 C354.7,-2.0 533.3,-2.0 712.0,-2.0 C712.0,96.7 712.0,195.3 712.0,294.0 C645.6,294.0 579.1,294.0 512.7,294.0 C441.8,302.7 370.9,311.3 300.0,320.0 C286.2,327.5 272.4,334.9 258.6,342.4 C255.7,342.0 254.5,342.8 249.9,341.1 C245.3,339.4 237.6,335.5 231.0,332.4 C224.4,329.3 215.9,325.7 210.1,322.4 C204.3,319.1 202.1,318.6 196.4,312.4 C190.7,306.2 181.0,292.1 176.0,285.0 C171.0,277.9 169.7,274.9 166.6,269.8 C161.1,266.5 155.5,263.3 150.0,260.0 C146.7,250.0 143.3,240.0 140.0,230.0 C148.3,213.3 156.7,196.7 165.0,180.0 C170.7,153.3 176.3,126.7 182.0,100.0 C181.7,83.3 181.3,66.7 181.0,50.0 C179.3,32.7 177.7,15.3 176.0,-2.0 Z", "#e5a655"], ["M182.9,173.6 C193.5,169.4 207.7,164.6 214.7,161.1 C221.7,157.6 220.1,155.5 224.7,152.4 C229.3,149.3 236.2,145.1 242.2,142.4 C248.2,139.7 253.8,137.7 260.9,136.1 C268.0,134.5 274.7,133.5 285.0,132.7 C295.3,131.9 310.0,131.1 322.5,131.2 C335.0,131.3 347.4,132.2 359.9,133.5 C372.4,134.8 384.9,136.4 397.4,138.7 C409.9,140.9 423.7,144.0 434.9,147.0 C446.1,150.0 456.4,153.9 464.8,156.7 C473.2,159.4 477.9,161.0 485.0,163.5 C492.1,166.0 500.0,169.0 507.5,171.7 C517.5,169.0 526.3,165.6 537.5,163.5 C548.7,161.4 562.4,159.5 574.9,159.0 C587.4,158.5 601.1,159.1 612.4,160.5 C623.6,161.9 632.9,165.0 642.4,167.2 C651.9,169.4 660.3,171.7 669.3,173.9 C674.3,171.4 679.7,168.9 684.3,166.5 C688.9,164.1 692.4,162.3 697.0,159.7 C701.6,157.1 707.0,153.9 712.0,151.0 C712.0,223.3 712.0,295.7 712.0,368.0 C707.0,362.0 701.6,355.2 697.0,350.0 C692.4,344.8 688.2,341.8 684.3,336.5 C680.4,331.2 677.7,325.6 673.8,318.5 C669.9,311.4 665.3,302.0 661.1,293.7 C611.6,293.7 562.2,293.7 512.7,293.7 C510.6,298.1 509.2,301.4 506.5,307.0 C503.8,312.6 501.8,320.4 496.5,327.4 C491.2,334.4 483.3,342.8 474.9,349.0 C466.5,355.2 456.8,360.3 446.0,364.9 C435.2,369.5 421.9,374.0 409.9,376.5 C397.9,379.0 384.6,379.5 373.9,380.1 C363.2,380.7 353.7,380.4 345.9,380.0 C338.1,379.6 333.2,379.0 327.2,377.9 C321.2,376.8 316.0,375.9 309.8,373.5 C303.6,371.1 296.2,367.6 289.8,363.6 C283.4,359.7 276.3,353.3 271.1,349.8 C265.9,346.3 262.8,344.9 258.6,342.4 C255.7,335.7 253.0,328.8 249.9,322.4 C246.8,315.9 242.9,309.9 239.9,303.7 C236.9,297.5 234.7,292.9 232.1,285.0 C229.5,277.1 227.3,265.6 224.6,256.1 C221.9,246.6 218.8,237.4 215.9,228.0 C210.5,228.6 205.5,228.6 199.7,229.9 C193.9,231.2 185.8,233.8 181.0,236.1 C176.2,238.4 174.3,241.1 171.0,243.6 C167.3,235.7 161.0,228.9 160.0,220.0 C159.0,211.1 163.3,200.0 165.0,190.0 C171.0,184.5 176.9,179.1 182.9,173.6 Z", "#643d33"], ["M285.0,195.0 C279.5,198.5 276.4,203.0 274.5,207.0 C272.6,211.0 273.2,212.0 273.7,219.0 C274.2,226.0 275.1,237.5 277.5,249.0 C279.9,260.5 284.3,278.3 288.0,288.0 C291.7,297.7 295.3,302.1 299.8,307.4 C304.3,312.7 309.2,315.9 314.8,319.9 C320.4,323.8 327.3,328.7 333.5,331.1 C339.7,333.5 344.3,333.8 352.2,334.3 C360.1,334.8 370.6,334.4 381.0,333.9 C391.4,333.3 405.9,332.8 414.3,331.0 C422.7,329.2 426.3,326.6 431.6,323.1 C436.9,319.6 441.7,316.0 446.0,310.1 C450.3,304.2 454.4,295.7 457.3,288.0 C460.2,280.3 461.9,272.4 463.3,263.9 C464.7,255.4 465.9,244.2 465.6,237.0 C465.4,229.8 464.4,224.9 461.8,220.4 C459.2,215.9 455.5,213.7 449.8,209.9 C444.1,206.2 437.4,201.8 427.4,197.9 C417.4,194.0 403.6,189.1 389.9,186.7 C376.1,184.2 358.6,183.3 344.9,183.2 C331.2,183.1 317.5,183.9 307.5,185.9 C297.5,187.9 290.5,191.5 285.0,195.0 Z", "#e5a655"], ["M528.5,226.5 C533.2,224.2 543.4,222.0 552.4,220.5 C561.4,219.0 572.4,217.5 582.4,217.5 C592.4,217.5 602.4,218.5 612.4,220.5 C622.4,222.5 636.4,226.8 642.4,229.5 C648.4,232.2 646.6,232.5 648.3,237.0 C650.0,241.5 650.9,247.7 652.8,256.5 C654.7,265.3 658.5,283.8 659.6,290.0 C660.7,296.2 659.6,292.7 659.6,294.0 C610.6,294.0 561.7,294.0 512.7,294.0 C515.0,281.5 517.6,266.5 519.5,256.5 C521.4,246.5 522.5,239.0 524.0,234.0 C525.5,229.0 523.8,228.8 528.5,226.5 Z", "#e5a655"], ["M333.5,256.5 A46.5,67.5 0 1,0 426.5,256.5 A46.5,67.5 0 1,0 333.5,256.5 Z", "#643d33"], ["M351,226.3 A14,14 0 1,0 379,226.3 A14,14 0 1,0 351,226.3 Z", "#ffffff"], ["M168.0,-2.0 C168.2,7.0 168.4,16.3 168.7,25.0 C169.0,33.7 169.2,42.5 170.0,50.0 C170.8,57.5 172.1,62.5 173.7,70.0 C175.2,77.5 178.0,89.7 179.3,95.0 C180.6,100.3 181.6,99.3 181.7,102.0 C181.8,104.7 181.8,105.3 179.8,111.0 C177.8,116.7 172.7,128.3 169.8,136.0 C166.9,143.7 164.5,150.5 162.4,157.0 C160.3,163.5 158.9,169.5 157.4,175.0 C155.9,180.5 155.7,185.8 153.6,190.0 C151.5,194.2 148.6,195.8 144.8,200.0 C141.1,204.2 135.7,209.4 131.1,215.0 C126.5,220.6 120.9,228.0 117.4,233.6 C113.9,239.2 111.8,243.4 109.9,248.6 C108.0,253.8 106.8,260.0 106.2,264.8 C105.6,269.6 105.7,273.9 106.2,277.3 C106.7,280.7 106.1,281.2 109.1,285.0 C112.1,288.8 119.1,295.0 124.1,300.0 C117.0,303.7 107.7,308.5 102.9,311.2 C98.1,313.9 97.0,314.1 95.4,316.2 C93.8,318.3 93.1,321.4 93.5,323.7 C93.9,326.0 94.8,326.2 97.9,329.9 C101.0,333.6 107.4,340.7 112.2,346.1 C109.1,347.8 110.1,349.7 102.9,351.1 C95.7,352.6 76.1,353.4 69.2,354.8 C62.3,356.2 63.2,357.9 61.7,359.8 C60.2,361.7 59.7,362.6 60.5,366.0 C61.3,369.4 62.6,374.4 66.7,380.0 C70.8,385.6 79.0,394.0 85.0,399.5 C91.0,405.0 97.5,409.0 103.0,413.0 C108.5,417.0 114.7,421.0 117.9,423.5 C121.1,426.0 122.0,425.8 122.4,428.0 C122.8,430.2 119.7,433.8 120.2,437.0 C120.7,440.2 121.3,442.9 125.4,447.4 C129.5,451.9 136.7,458.4 144.9,463.9 C153.2,469.4 164.9,476.1 174.9,480.4 C184.9,484.6 196.6,487.3 204.9,489.4 C213.2,491.5 218.7,491.6 225.0,493.0 C231.3,494.4 238.0,495.8 243.0,497.5 C248.0,499.2 248.0,499.0 255.0,503.5 C262.0,508.0 275.0,517.9 285.0,524.4 C295.0,530.9 305.4,537.1 314.9,542.4 C324.4,547.6 336.1,552.6 341.9,555.9 C347.6,559.1 347.6,559.9 349.4,561.9 C351.1,563.9 351.4,566.0 352.4,568.0 C360.1,569.8 367.8,571.7 375.5,573.5 C377.0,573.0 371.8,570.0 380.0,572.0 C388.2,574.0 409.9,581.8 424.9,585.5 C439.9,589.2 454.9,591.9 469.9,594.4 C484.9,596.9 501.6,598.9 514.8,600.4 C528.0,601.9 538.1,602.7 549.0,603.4 C559.9,604.1 564.8,605.1 579.9,604.8 C595.0,604.5 620.3,603.2 639.8,601.8 C659.3,600.4 685.0,597.7 697.0,596.6 C709.0,595.5 707.0,595.5 712.0,595.0 C712.0,587.0 712.0,579.0 712.0,571.0 C707.0,571.6 704.0,571.9 697.0,572.7 C690.0,573.5 679.2,574.8 669.7,575.7 C660.2,576.6 654.8,577.2 639.8,577.9 C624.8,578.6 595.0,579.7 579.9,580.1 C564.8,580.5 564.8,581.1 549.0,580.2 C533.2,579.4 503.1,577.4 484.9,575.0 C466.7,572.6 453.2,569.2 439.9,566.0 C426.5,562.8 415.6,559.3 404.8,555.9 C394.0,552.5 384.9,549.1 374.9,545.4 C364.9,541.6 354.9,537.9 344.9,533.4 C334.9,528.9 324.9,524.1 314.9,518.4 C304.9,512.7 293.5,505.0 285.0,499.0 C276.5,493.0 268.8,486.6 264.0,482.5 C259.2,478.4 259.2,476.1 256.5,474.2 C253.8,472.3 251.1,471.7 247.5,471.2 C243.9,470.7 241.9,472.1 234.8,471.4 C227.7,470.7 214.9,469.6 204.9,466.9 C194.9,464.1 183.4,459.1 174.9,454.9 C166.4,450.6 157.7,444.6 153.9,441.4 C150.2,438.1 150.4,438.1 152.4,435.4 C154.4,432.7 163.4,428.0 165.9,425.0 C168.4,422.0 167.9,420.1 167.4,417.5 C166.9,414.9 166.7,410.8 162.9,409.2 C159.2,407.6 151.2,408.4 144.9,407.7 C138.7,406.9 131.7,407.1 125.4,404.7 C119.2,402.3 113.2,398.2 107.4,393.5 C101.6,388.8 96.1,382.2 90.4,376.6 C97.6,373.7 105.1,370.6 112.0,368.0 C118.9,365.4 127.1,363.0 132.0,361.0 C136.9,359.0 139.3,358.2 141.5,356.1 C143.7,354.0 145.5,351.5 145.3,348.6 C145.1,345.7 143.2,342.4 140.3,338.6 C137.4,334.9 132.0,330.3 127.8,326.1 C132.8,319.5 138.1,313.1 142.8,306.2 C147.5,299.3 152.0,290.9 155.9,285.0 C159.8,279.1 162.6,275.7 166.0,271.0 C167.3,264.0 168.0,259.3 170.0,250.0 C172.0,240.7 175.8,227.8 178.0,215.0 C180.2,202.2 181.3,187.0 182.9,173.0 C183.1,169.9 182.4,168.3 183.6,163.6 C184.8,158.9 187.1,151.8 189.8,144.9 C192.5,138.0 196.2,130.7 199.8,122.4 C203.4,114.1 206.5,104.2 211.1,95.0 C215.7,85.8 221.9,75.6 227.3,67.3 C232.7,58.9 237.7,52.6 243.5,44.9 C249.3,37.2 255.8,29.0 262.2,21.2 C268.6,13.4 275.4,5.7 282.0,-2.0 C272.0,-2.0 262.0,-2.0 252.0,-2.0 C245.0,8.2 237.6,19.4 231.0,28.7 C224.4,38.0 217.9,46.4 212.3,53.6 C206.7,60.8 202.4,65.9 197.5,72.0 C196.4,70.4 195.1,71.0 194.3,67.3 C193.6,63.6 193.5,57.0 193.0,50.0 C192.5,43.0 191.6,33.7 191.1,25.0 C190.6,16.3 190.3,7.0 189.9,-2.0 C182.6,-2.0 175.3,-2.0 168.0,-2.0 Z", "#643d33"], ["M340.0,552.0 C338.3,555.0 347.8,559.9 350.0,563.0 C352.2,566.1 351.2,565.5 353.0,570.5 C354.8,575.5 357.0,584.5 360.5,593.0 C364.0,601.5 371.4,615.7 374.0,621.4 C376.6,627.1 376.7,622.3 376.2,627.4 C375.7,632.5 372.7,643.8 371.0,652.0 C401.3,652.0 431.7,652.0 462.0,652.0 C459.1,647.8 455.8,643.7 453.4,639.4 C451.0,635.1 449.9,630.7 447.4,626.0 C444.9,621.3 441.1,613.8 438.4,611.0 C435.6,608.2 433.4,608.9 430.9,609.4 C428.4,609.9 425.6,610.6 423.4,614.0 C421.1,617.4 419.4,624.5 417.4,629.7 C412.4,624.9 407.4,620.5 402.4,615.4 C397.4,610.3 391.7,605.0 387.5,599.0 C383.3,593.0 379.0,583.8 377.0,579.5 C375.0,575.2 376.0,575.5 375.5,573.5 C382.0,570.7 388.5,567.8 395.0,565.0 C383.3,558.3 371.7,551.7 360.0,545.0 C353.3,547.3 341.7,549.0 340.0,552.0 Z", "#643d33"], ["M549.4,292.4 C549.9,289.9 549.1,282.9 550.9,278.9 C552.6,274.9 555.9,271.3 559.9,268.4 C563.9,265.5 569.9,262.9 574.9,261.7 C579.9,260.4 584.9,260.5 589.9,260.9 C594.9,261.3 600.4,262.1 604.9,263.9 C609.4,265.6 613.8,268.4 616.9,271.4 C620.0,274.4 622.1,278.2 623.6,281.9 C625.1,285.6 626.0,291.3 625.9,293.7 C625.8,296.1 624.4,294.6 622.9,296.0 C621.4,297.4 619.9,299.5 616.9,302.0 C613.9,304.5 607.9,308.6 604.9,311.0 C601.9,313.4 598.1,313.7 598.9,316.2 C599.6,318.7 605.9,323.9 609.4,326.0 C612.9,328.1 614.9,329.2 619.9,329.0 C624.9,328.8 634.7,326.5 639.4,324.5 C644.1,322.5 645.3,319.0 648.3,317.0 C651.3,315.0 654.5,312.9 657.3,312.5 C660.0,312.1 662.8,313.2 664.8,314.7 C666.8,316.2 668.8,318.9 669.3,321.5 C669.8,324.1 670.3,326.9 667.8,330.5 C665.3,334.1 659.8,339.9 654.3,343.2 C648.8,346.4 641.1,348.8 634.9,350.0 C628.7,351.2 622.9,351.2 616.9,350.7 C610.9,350.2 603.9,348.5 598.9,346.9 C593.9,345.3 590.9,343.1 586.9,341.2 C582.9,342.6 580.6,343.8 574.9,345.4 C569.1,347.0 558.6,349.9 552.4,350.7 C546.2,351.5 543.5,351.6 537.5,350.0 C531.5,348.4 521.5,344.0 516.5,341.0 C511.5,338.0 509.2,335.0 507.5,332.0 C505.8,329.0 505.5,326.0 506.0,323.0 C506.5,320.0 508.8,315.8 510.5,314.0 C512.2,312.2 514.0,311.4 516.5,312.5 C519.0,313.6 522.8,318.4 525.5,320.7 C528.2,322.9 529.8,324.8 533.0,326.0 C536.2,327.2 540.4,327.9 544.9,328.2 C549.4,328.4 555.4,328.4 559.9,327.5 C564.4,326.6 569.5,324.9 571.9,323.0 C574.3,321.1 574.5,318.1 574.2,316.2 C574.0,314.3 572.3,313.4 570.4,311.7 C568.5,309.9 565.7,307.9 563.0,305.7 C560.3,303.4 556.5,300.2 554.0,298.2 C551.5,296.2 548.8,294.7 548.0,293.7 C547.2,292.7 548.9,294.9 549.4,292.4 Z", "#643d33"], ["M675.7,652.0 C677.7,647.8 679.2,642.3 681.7,639.3 C684.2,636.3 688.1,634.6 690.6,634.0 C693.1,633.4 693.4,633.7 697.0,635.5 C700.6,637.3 707.0,641.8 712.0,645.0 C712.0,647.3 712.0,649.7 712.0,652.0 C699.9,652.0 687.8,652.0 675.7,652.0 Z", "#643d33"], ["M394.2,645.4 C397.5,646.9 400.7,648.5 404.0,650.0 C401.0,650.7 398.0,651.3 395.0,652.0 C394.7,649.8 394.5,647.6 394.2,645.4 Z", "#e5a655"]];
for(var i=0;i<ops.length;i++){x.fillStyle=ops[i][1]; x.fill(new Path2D(ops[i][0]));}
try{
var W=cv.width,H=cv.height,id=x.getImageData(0,0,W,H),d=id.data,src=new Float32Array(d.length),k=1.0;
for(var i=0;i<d.length;i++)src[i]=d[i];
for(var yy=0;yy<H;yy++)for(var xx=0;xx<W;xx++){
 for(var c=0;c<3;c++){var sum=0,n=0;
  for(var dy=-1;dy<=1;dy++){var y2=yy+dy; if(y2<0||y2>=H)continue;
   for(var dx=-1;dx<=1;dx++){var x2=xx+dx; if(x2<0||x2>=W)continue; sum+=src[(y2*W+x2)*4+c]; n++;}}
  var p=(yy*W+xx)*4+c, v=src[p]+k*(src[p]-sum/n); d[p]=v<0?0:v>255?255:v;}
}
x.putImageData(id,0,0);
}catch(e){}
})();
</script>
</body></html>
